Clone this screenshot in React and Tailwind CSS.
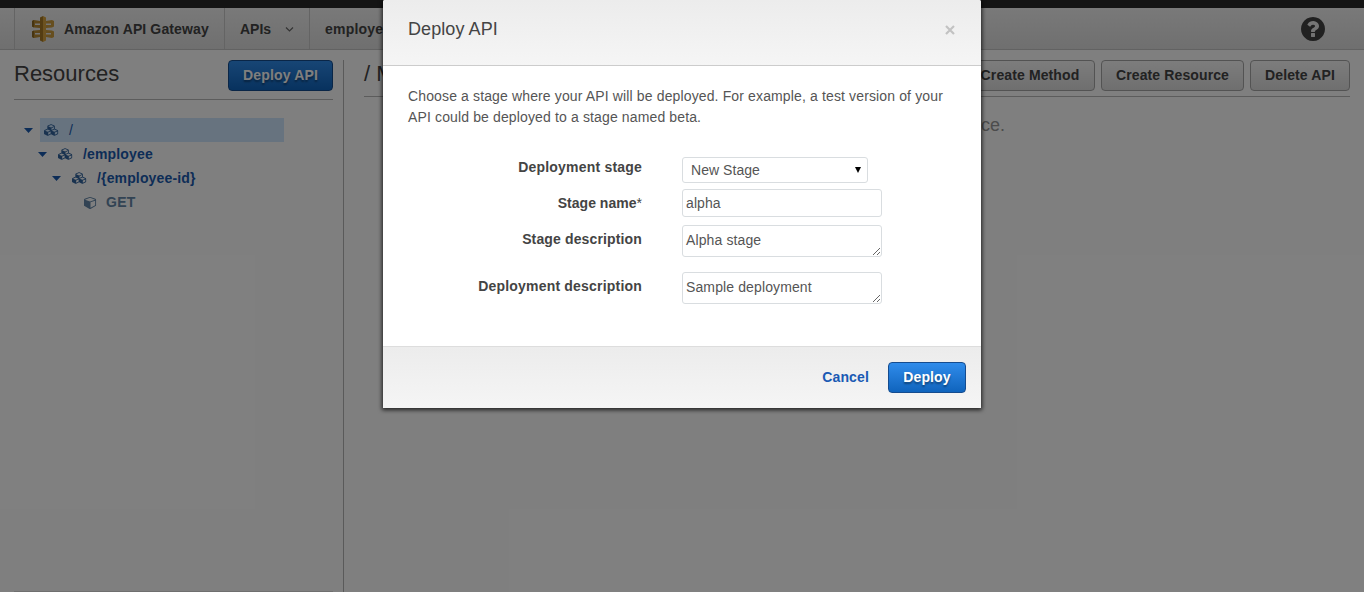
import React from "react";

function Cubes({ className }) {
  return (
    <svg viewBox="0 0 2304 1792" fill="currentColor" className={className}>
      <path d="M640 1632l384-192v-314l-384 164v342zm-64-454l404-173-404-173-404 173zm1088 454l384-192v-314l-384 164v342zm-64-454l404-173-404-173-404 173zm-448-293l384-165v-266l-384 164v267zm-64-379l441-189-441-189-441 189zm1088 518v416q0 36-19 67t-52 47l-448 224q-25 14-57 14t-57-14l-448-224q-5-2-7-4-2 2-7 4l-448 224q-25 14-57 14t-57-14l-448-224q-33-16-52-47t-19-67v-416q0-38 21.500-70t56.500-48l434-186v-400q0-38 21.500-70t56.500-48l448-192q23-10 50-10t50 10l448 192q35 16 56.500 48t21.500 70v400l434 186q36 16 57 48t21 70z" />
    </svg>
  );
}

function Cube({ className }) {
  return (
    <svg viewBox="0 0 1792 1792" fill="currentColor" className={className}>
      <path d="M896 1629l640-349v-636l-640 233v752zm-64-865l698-254-698-254-698 254zm832-252v768q0 35-18 65t-49 47l-704 384q-28 16-61 16t-61-16l-704-384q-31-17-49-47t-18-65v-768q0-40 23-73t61-47l704-256q22-8 44-8t44 8l704 256q38 14 61 47t23 73z" />
    </svg>
  );
}

function Caret() {
  return (
    <svg viewBox="0 0 9 5" className="h-[5px] w-[9px] fill-[#1a5aae]">
      <path d="M0 0h9L4.500 5z" />
    </svg>
  );
}

function GatewayLogo() {
  return (
    <svg viewBox="0 0 22 26" className="h-[26px] w-[22px]">
      <path fill="#b98a32" d="M0 5l2-1 6 1v2.500H3V9h5v3l-6-.5-2-1zM0 21l2 1 6-1v-2.500H3V17h5v-3l-6 .5-2 1z" />
      <path fill="#cc9c3e" d="M22 5l-2-1-6 1v2.500h5V9h-5v3l6-.5 2-1zM22 21l-2 1-6-1v-2.500h5V17h-5v-3l6 .5 2 1z" />
      <path fill="#8f6a24" d="M0 5l2-1v7.500l-2-1zM0 21l2 1v-7.500l-2 1z" />
      <path fill="#a87b26" d="M11 0L8 1.500v23l3 1.500z" />
      <path fill="#d8a440" d="M11 0l3 1.500v23L11 26z" />
    </svg>
  );
}

function GrayButton({ children, className }) {
  return (
    <button
      className={
        "h-[31px] shrink-0 rounded-[4px] border border-[#a6a6a6] bg-linear-to-b from-[#fafafa] to-[#dedede] text-center text-sm leading-[29px] font-bold tracking-[0.12px] text-[#444] " +
        className
      }
    >
      {children}
    </button>
  );
}

function BlueButton({ children, className }) {
  return (
    <button
      className={
        "h-[31px] shrink-0 rounded-[4px] border border-[#154c8f] bg-linear-to-b from-[#2f8ceb] to-[#0f64bd] text-center text-sm leading-[29px] font-bold text-white [text-shadow:0_2px_2px_rgba(0,0,0,0.4)] " +
        className
      }
    >
      {children}
    </button>
  );
}

function TopNav() {
  return (
    <header>
      <div className="h-2 bg-[#282828]" />
      <nav className="flex h-[42px] items-stretch border-b border-[#c4c4c4] bg-linear-to-b from-[#f3f3f3] to-[#dfdfdf] text-sm leading-[42px] font-bold text-[#444]">
        <div className="w-[15px] border-r border-[#c8c8c8]" />
        <div className="flex w-[210px] items-center border-r border-[#c8c8c8] pl-[17px]">
          <GatewayLogo />
          <span className="ml-[10px] pt-px whitespace-nowrap tracking-[0.12px]">Amazon API Gateway</span>
        </div>
        <div className="flex w-[85px] items-center border-r border-[#c8c8c8] pl-[15px]">
          <span className="pt-px">APIs</span>
          <svg viewBox="0 0 9 5" className="mt-[2px] ml-[14px] h-[5px] w-[9px] fill-none stroke-[#666] stroke-[1.2]">
            <path d="M1 .5l3.500 3.500L8 .5" />
          </svg>
        </div>
        <div className="pl-[15px] tracking-[0.2px]">employees</div>
        <div className="ml-auto flex items-center pr-[39px]">
          <svg viewBox="0 0 1536 1536" className="h-6 w-6 fill-[#424242]">
            <path d="M896 1248v-192q0-14-9-23t-23-9H672q-14 0-23 9t-9 23v192q0 14 9 23t23 9h192q14 0 23-9t9-23zm256-672q0-88-55.500-163T958 297t-170-41q-243 0-371 213-15 24 8 42l132 100q7 6 19 6 16 0 25-12 53-68 86-92 34-24 86-24 48 0 85.500 26t37.500 59q0 38-20 61t-68 45q-63 28-115.500 86.500T640 892v36q0 14 9 23t23 9h192q14 0 23-9t9-23q0-19 21.500-49.500T972 829q32-18 49-28.500t46-35 44.500-48 28-60.500 12.500-81zm384 192q0 209-103 385.500T1153.500 1433 768 1536t-385.500-103T103 1153.500 0 768t103-385.500T382.500 103 768 0t385.500 103T1433 382.500 1536 768z" />
          </svg>
        </div>
      </nav>
    </header>
  );
}

function TreeRow({ indent, icon, label, selected, leaf }) {
  return (
    <div className={"flex h-6 items-center text-sm font-bold tracking-[0.15px] text-[#1a5aae] " + indent}>
      <div className="w-4 shrink-0">{!leaf && <Caret />}</div>
      <div className={"flex h-6 items-center pl-1 " + (selected ? "w-[244px] bg-[#cfe7ff]" : "")}>
        {icon}
        {label}
      </div>
    </div>
  );
}

function Sidebar() {
  const cubes = <Cubes className="mr-[10px] h-3 w-[15px] text-[#32659f]" />;
  return (
    <aside className="flex w-[344px] shrink-0 flex-col pt-[10px]">
      <div className="flex grow flex-col border-r border-[#b4b4b4] pr-[10px] pl-[14px]">
        <div className="flex h-[40px] items-start justify-between border-b border-[#b9b9b9]">
          <h1 className="text-[22px] leading-[27px] text-[#444]">Resources</h1>
          <BlueButton className="w-[105px] tracking-[0.15px]">Deploy API</BlueButton>
        </div>
        <div className="pt-[18px]">
          <TreeRow indent="pl-[10px]" selected icon={cubes} label={<span className="font-normal">/</span>} />
          <TreeRow indent="pl-[24px]" icon={cubes} label="/employee" />
          <TreeRow indent="pl-[38px]" icon={cubes} label="/{employee-id}" />
          <TreeRow
            indent="pl-[50px]"
            leaf
            icon={<Cube className="mr-[9px] h-[13px] w-[13px] text-[#6487a8]" />}
            label={<span className="tracking-[0.3px] text-[#6487a8]">GET</span>}
          />
        </div>
        <div className="mt-auto h-px bg-[#dedede]" />
      </div>
    </aside>
  );
}

function Main() {
  return (
    <main className="grow pt-[10px] pr-[14px] pl-5">
      <div className="flex h-[37px] items-start gap-[6px] border-b border-[#b9b9b9]">
        <h2 className="mr-auto text-[22px] leading-[27px] text-[#444]">/ Methods</h2>
        <GrayButton className="w-[130px]">Create Method</GrayButton>
        <GrayButton className="w-[143px]">Create Resource</GrayButton>
        <GrayButton className="w-[100px]">Delete API</GrayButton>
      </div>
      <p className="pt-[17px] pr-[345px] text-right text-lg leading-[22px] text-[#999]">
        No methods defined for the resource.
      </p>
    </main>
  );
}

function Label({ children, className = "" }) {
  return (
    <label className={"w-[234px] shrink-0 text-right text-sm leading-5 font-bold text-[#444] " + className}>
      {children}
    </label>
  );
}

function TextArea({ children }) {
  return (
    <div className="flex h-8 w-[200px] items-end justify-between rounded-[3px] border border-[#d9dde0] bg-white pl-[3px] text-[#555]">
      <span className="self-start leading-[28px] tracking-[0.12px]">{children}</span>
      <svg viewBox="0 0 9 9" className="h-[9px] w-[9px] fill-none stroke-[#666]">
        <path d="M1 8l7-7M5 8l3-3" />
      </svg>
    </div>
  );
}

function DeployDialog() {
  return (
    <section
      role="dialog"
      className="absolute top-0 left-[383px] flex h-[408px] w-[598px] flex-col rounded-t-[2px] bg-white text-sm shadow-[0_1px_4px_1px_rgba(0,0,0,0.75)]"
    >
      <div className="flex h-[66px] items-center justify-between rounded-t-[2px] border-b border-[#ccc] bg-linear-to-b from-[#ececec] to-[#f5f5f5] pr-[26px] pb-[7px] pl-[25px]">
        <h3 className="text-lg leading-6 tracking-[0.08px] text-[#444]">Deploy API</h3>
        <svg viewBox="0 0 10 10" className="mt-[1px] h-[10px] w-[10px] fill-none stroke-[#c2c2c2] stroke-[2.2]">
          <path d="M1 1l8 8M9 1L1 9" />
        </svg>
      </div>
      <div className="flex grow flex-col pt-5 pl-[25px] text-[#555]">
        <p className="leading-[21px] tracking-[0.135px]">
          Choose a stage where your API will be deployed. For example, a test version of your
          <br />
          API could be deployed to a stage named beta.
        </p>
        <div className="mt-[29px] flex h-8 items-start gap-10">
          <Label className="tracking-[0.2px]">Deployment stage</Label>
          <div className="flex h-[26px] w-[186px] items-center justify-between rounded-[3px] border border-[#d9dde0] pr-[6px] pl-2">
            <span className="tracking-[0.05px]">New Stage</span>
            <svg viewBox="0 0 6 6" className="h-[6px] w-[6px] fill-black">
              <path d="M0 0h6L3 6z" />
            </svg>
          </div>
        </div>
        <div className="flex h-9 items-start gap-10">
          <Label className="pt-1 tracking-[0.02px]">
            Stage name<span className="font-normal">*</span>
          </Label>
          <div className="h-7 w-[200px] rounded-[3px] border border-[#d9dde0] pl-[3px] leading-[26px] tracking-[0.1px]">
            alpha
          </div>
        </div>
        <div className="flex h-[47px] items-start gap-10">
          <Label className="pt-1 tracking-[0.14px]">Stage description</Label>
          <TextArea>Alpha stage</TextArea>
        </div>
        <div className="flex items-start gap-10">
          <Label className="pt-1 tracking-[0.2px]">Deployment description</Label>
          <TextArea>Sample deployment</TextArea>
        </div>
      </div>
      <div className="flex h-[62px] items-center justify-end border-t border-[#ddd] bg-linear-to-b from-[#ececec] to-[#f5f5f5] pr-[15px]">
        <span className="mr-[19px] pb-[2px] font-bold tracking-[0.15px] text-[#1a5ab4]">Cancel</span>
        <BlueButton className="w-[78px] tracking-[0.1px]">Deploy</BlueButton>
      </div>
    </section>
  );
}

export default function App() {
  return (
    <div className="relative flex h-[592px] w-[1364px] flex-col overflow-hidden bg-white font-['Liberation_Sans',Arial,sans-serif]">
      <TopNav />
      <div className="flex grow">
        <Sidebar />
        <Main />
      </div>
      <div className="absolute inset-0 bg-black/50" />
      <DeployDialog />
    </div>
  );
}
